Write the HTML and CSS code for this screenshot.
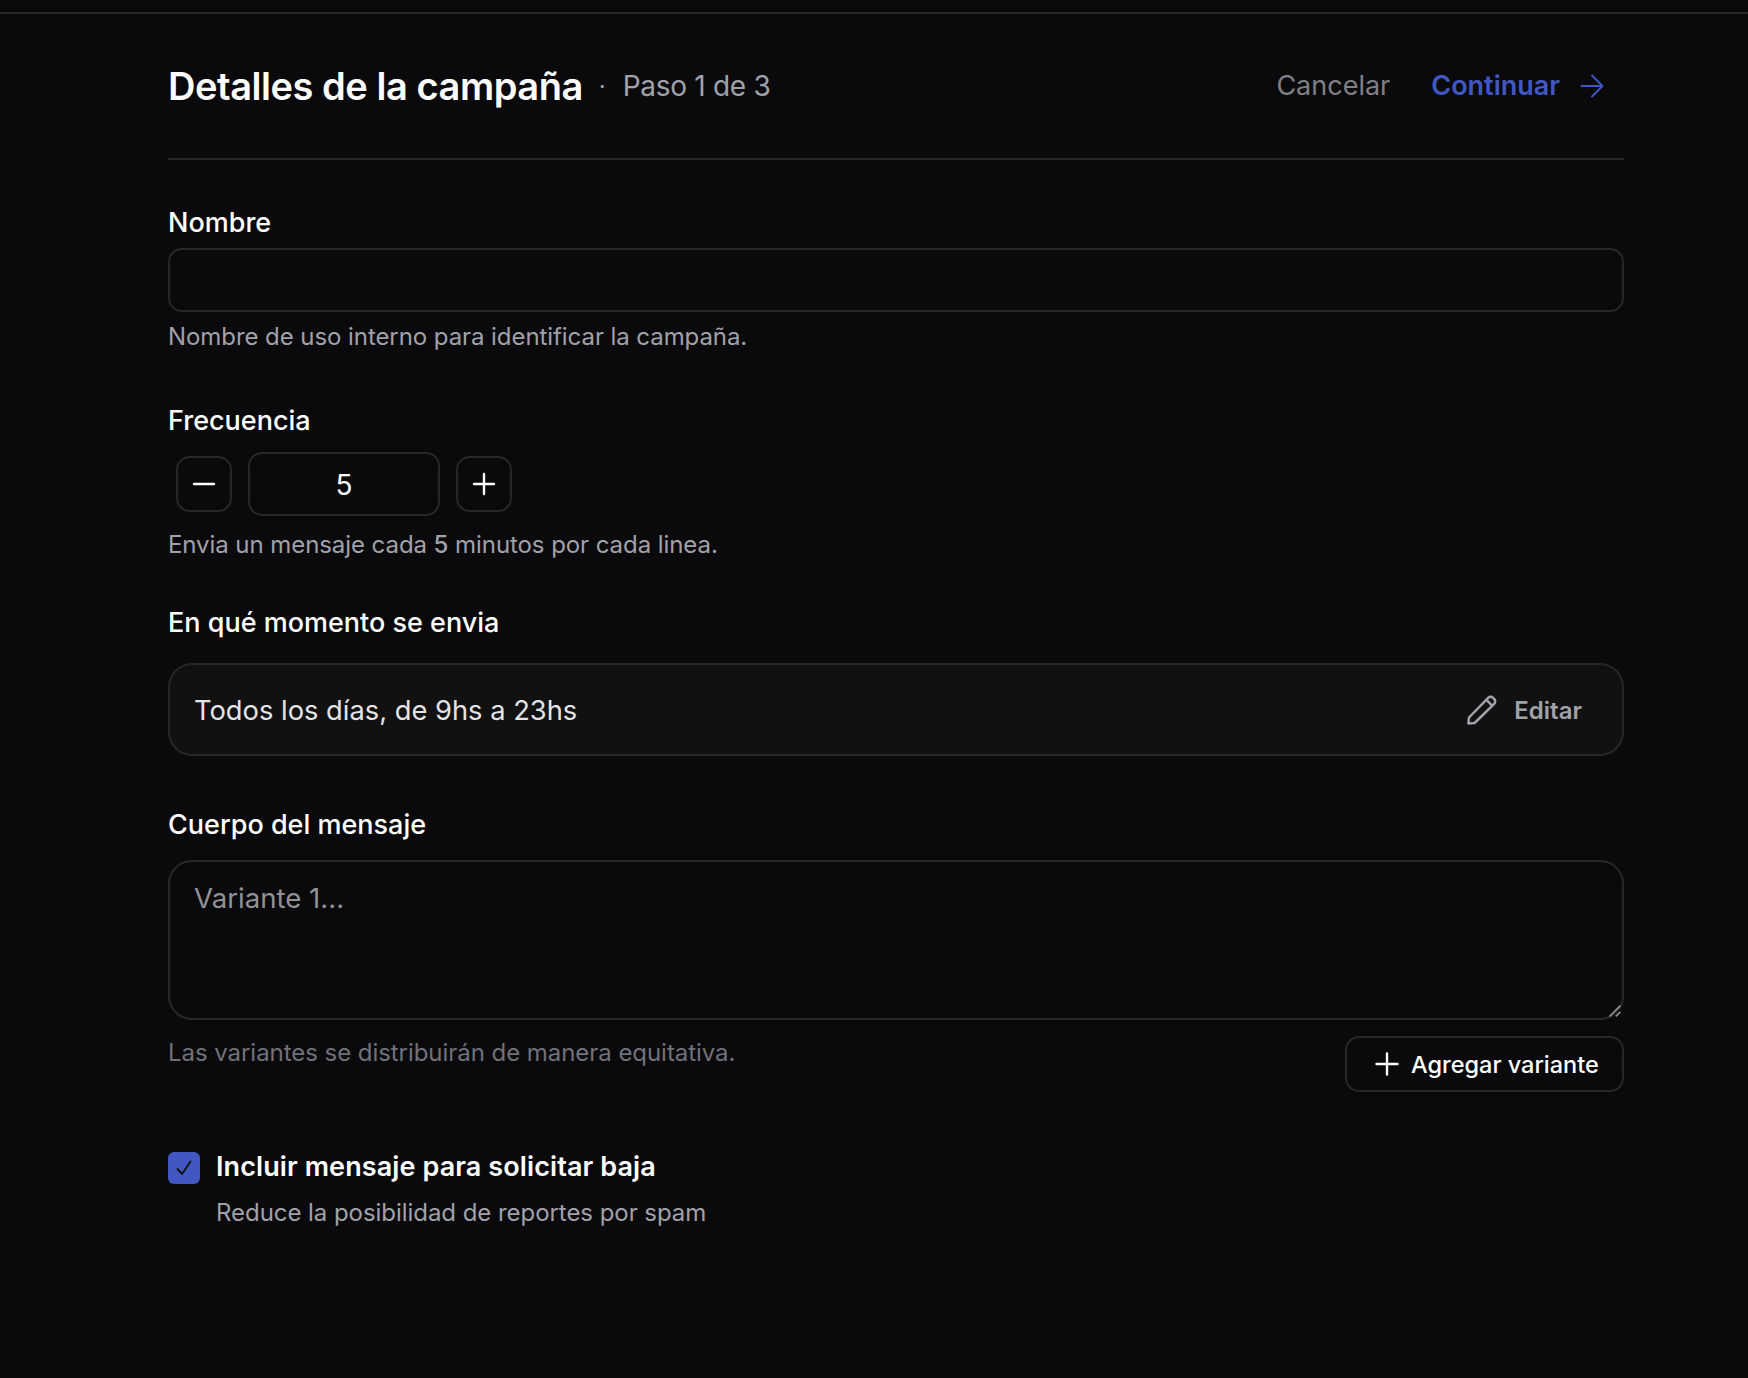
FILE: index.html
```html
<!DOCTYPE html>
<html lang="es">
<head>
<meta charset="utf-8">
<title>Detalles de la campaña</title>
<link rel="stylesheet" href="styles.css">
</head>
<body>
<div class="topbar"></div>
<main class="page">
  <header class="head">
    <div class="head-left">
      <h1 class="title">Detalles de la campaña</h1>
      <span class="dot">·</span>
      <span class="step">Paso 1 de 3</span>
    </div>
    <div class="head-right">
      <button class="link cancel">Cancelar</button>
      <button class="link next">Continuar
        <svg class="arrow" viewBox="0 0 24 24" fill="none" stroke="currentColor" stroke-width="1.9" stroke-linecap="round" stroke-linejoin="round"><path d="M1.5 12h21M12 1.5 22.5 12 12 22.5"/></svg>
      </button>
    </div>
  </header>

  <label class="label first" for="nombre">Nombre</label>
  <input class="input" id="nombre" type="text">
  <p class="help help-name">Nombre de uso interno para identificar la campaña.</p>

  <div class="label freq">Frecuencia</div>
  <div class="stepper">
    <button class="step-btn" aria-label="Restar"><svg class="step-icon" viewBox="0 0 24 24" fill="none" stroke="currentColor" stroke-width="2.4" stroke-linecap="round"><path d="M2 12h20"/></svg></button>
    <div class="step-value">5</div>
    <button class="step-btn" aria-label="Sumar"><svg class="step-icon" viewBox="0 0 24 24" fill="none" stroke="currentColor" stroke-width="2.4" stroke-linecap="round"><path d="M2 12h20M12 2v20"/></svg></button>
  </div>
  <p class="help help-freq">Envia un mensaje cada <span class="strong">5</span> minutos por cada linea.</p>

  <div class="label when">En qué momento se envia</div>
  <div class="schedule">
    <span class="schedule-text">Todos los días, de 9hs a 23hs</span>
    <button class="edit">
      <svg class="pencil" viewBox="0 0 30 30" fill="none" stroke="currentColor" stroke-width="2.5" stroke-linecap="round" stroke-linejoin="round"><path d="M2 22.5 21.2 2.8a3.4 3.4 0 0 1 4.8 0l1.2 1.2a3.4 3.4 0 0 1 0 4.8L7.6 28 1.4 28.6z"/><path d="M19.4 4.8l5.8 5.8"/></svg>
      Editar
    </button>
  </div>

  <label class="label body-label" for="cuerpo">Cuerpo del mensaje</label>
  <div class="textarea-wrap">
    <textarea class="textarea" id="cuerpo" placeholder="Variante 1..."></textarea>
    <svg class="grip" viewBox="0 0 12 12" fill="none" stroke="#8a8a8a" stroke-width="1.8"><path d="M0.5 11.5 11.5 0.5M6.8 11.5 11.5 6.8"/></svg>
  </div>
  <div class="variant-row">
    <p class="help muted">Las variantes se distribuirán de manera equitativa.</p>
    <button class="add">
      <svg class="add-icon" viewBox="0 0 24 24" fill="none" stroke="currentColor" stroke-width="2.4" stroke-linecap="round"><path d="M1.5 12h21M12 1.5v21"/></svg>
      Agregar variante
    </button>
  </div>

  <div class="check-row">
    <span class="checkbox"><svg class="check" viewBox="0 0 20 20" fill="none" stroke="currentColor" stroke-width="1.9" stroke-linecap="round" stroke-linejoin="round"><path d="M3.5 11 8 16 16.5 3.5"/></svg></span>
    <div class="check-text">
      <div class="check-label">Incluir mensaje para solicitar baja</div>
      <div class="help check-help">Reduce la posibilidad de reportes por spam</div>
    </div>
  </div>
</main>
</body>
</html>
```

FILE: styles.css
```css
* { box-sizing: border-box; }
html, body { margin: 0; height: 100%; }
body {
  background: #0a0a0c;
  color: #fff;
  font-family: Inter, "Liberation Sans", sans-serif;
  overflow: hidden;
}
button { font: inherit; background: none; border: 0; padding: 0; color: inherit; }
.topbar { height: 14px; border-bottom: 2px solid #27272a; }
.page { width: 1456px; margin-left: 168px; }

.head {
  height: 146px;
  border-bottom: 2px solid #27272a;
  display: flex;
  align-items: center;
  justify-content: space-between;
}
.head-left { display: flex; align-items: center; }
.title { margin: 0; font-size: 38px; font-weight: 600; line-height: 48px; letter-spacing: -0.45px; }
.dot { margin-left: 16px; font-size: 24px; color: #a1a1aa; }
.step { margin-left: 17px; font-size: 28px; letter-spacing: -0.3px; color: #a1a1aa; }
.head-right { display: flex; align-items: center; padding-right: 20px; }
.link { font-size: 27px; line-height: 36px; display: flex; align-items: center; }
.cancel { color: #808085; }
.next { margin-left: 41px; color: #4057c4; font-weight: 600; }
.arrow { width: 24px; height: 24px; margin-left: 20px; }

.label { display: block; font-size: 27px; line-height: 32px; font-weight: 450; color: #fff; }
.first { margin-top: 47px; }
.input {
  display: block; width: 100%; height: 64px; margin-top: 9px;
  background: transparent; border: 2px solid #27272a; border-radius: 14px;
  color: #fff; font: inherit;
}
.help { margin: 0; font-size: 24px; line-height: 32px; letter-spacing: -0.07px; color: #a1a1aa; }
.help-name { margin-top: 9px; }
.freq { margin-top: 52px; }
.stepper { display: flex; align-items: center; gap: 16px; margin: 15px 0 0 8px; height: 64px; }
.step-btn {
  width: 56px; height: 56px; border: 2px solid #27272a; border-radius: 14px;
  display: flex; align-items: center; justify-content: center; color: #fff;
}
.step-icon { width: 24px; height: 24px; }
.step-value {
  width: 192px; height: 64px; padding-top: 2px; border: 2px solid #27272a; border-radius: 14px;
  display: flex; align-items: center; justify-content: center; font-size: 28px; color: #fff;
}
.help-freq { margin-top: 13px; }
.strong { font-weight: 500; }
.when { margin-top: 46px; }
.schedule {
  margin-top: 24px; height: 93px; padding: 2px 40px 0 24px;
  background: #111112; border: 2px solid #27272a; border-radius: 24px;
  display: flex; align-items: center; justify-content: space-between;
}
.schedule-text { font-size: 27.3px; color: #e4e4e7; }
.edit { display: flex; align-items: center; gap: 17px; font-size: 24px; font-weight: 600; color: #a1a1aa; }
.pencil { width: 30px; height: 30px; margin-top: -2px; }
.body-label { margin-top: 53px; }
.textarea-wrap { position: relative; margin-top: 19px; }
.textarea {
  display: block; width: 100%; height: 160px; padding: 17px 24px;
  background: transparent; border: 2px solid #27272a; border-radius: 24px;
  color: #fff; font: 27.6px/38px Inter, "Liberation Sans", sans-serif;
  outline: none; resize: none;
}
.textarea::placeholder { color: #919196; opacity: 1; }
.grip { position: absolute; right: 3px; bottom: 3px; width: 12px; height: 12px; }
.variant-row { display: flex; justify-content: space-between; align-items: flex-start; margin-top: 16px; }
.muted { color: #71717a; margin-top: 1px; letter-spacing: -0.05px; }
.add {
  width: 279px; height: 56px; padding-left: 28px; border: 2px solid #27272a; border-radius: 14px;
  display: flex; align-items: center; gap: 12px;
  font-size: 23.5px; font-weight: 450; color: #fff;
}
.add-icon { width: 24px; height: 24px; }
.check-row { display: flex; gap: 16px; margin-top: 60px; }
.checkbox {
  width: 32px; height: 32px; border-radius: 6px; background: #4057c4; color: #111;
  display: flex; align-items: center; justify-content: center; flex: none;
}
.check { width: 20px; height: 20px; }
.check-label { font-size: 27px; line-height: 32px; font-weight: 600; letter-spacing: 0.1px; margin-top: -1px; }
.check-help { margin-top: 14px; letter-spacing: -0.05px; }
```
